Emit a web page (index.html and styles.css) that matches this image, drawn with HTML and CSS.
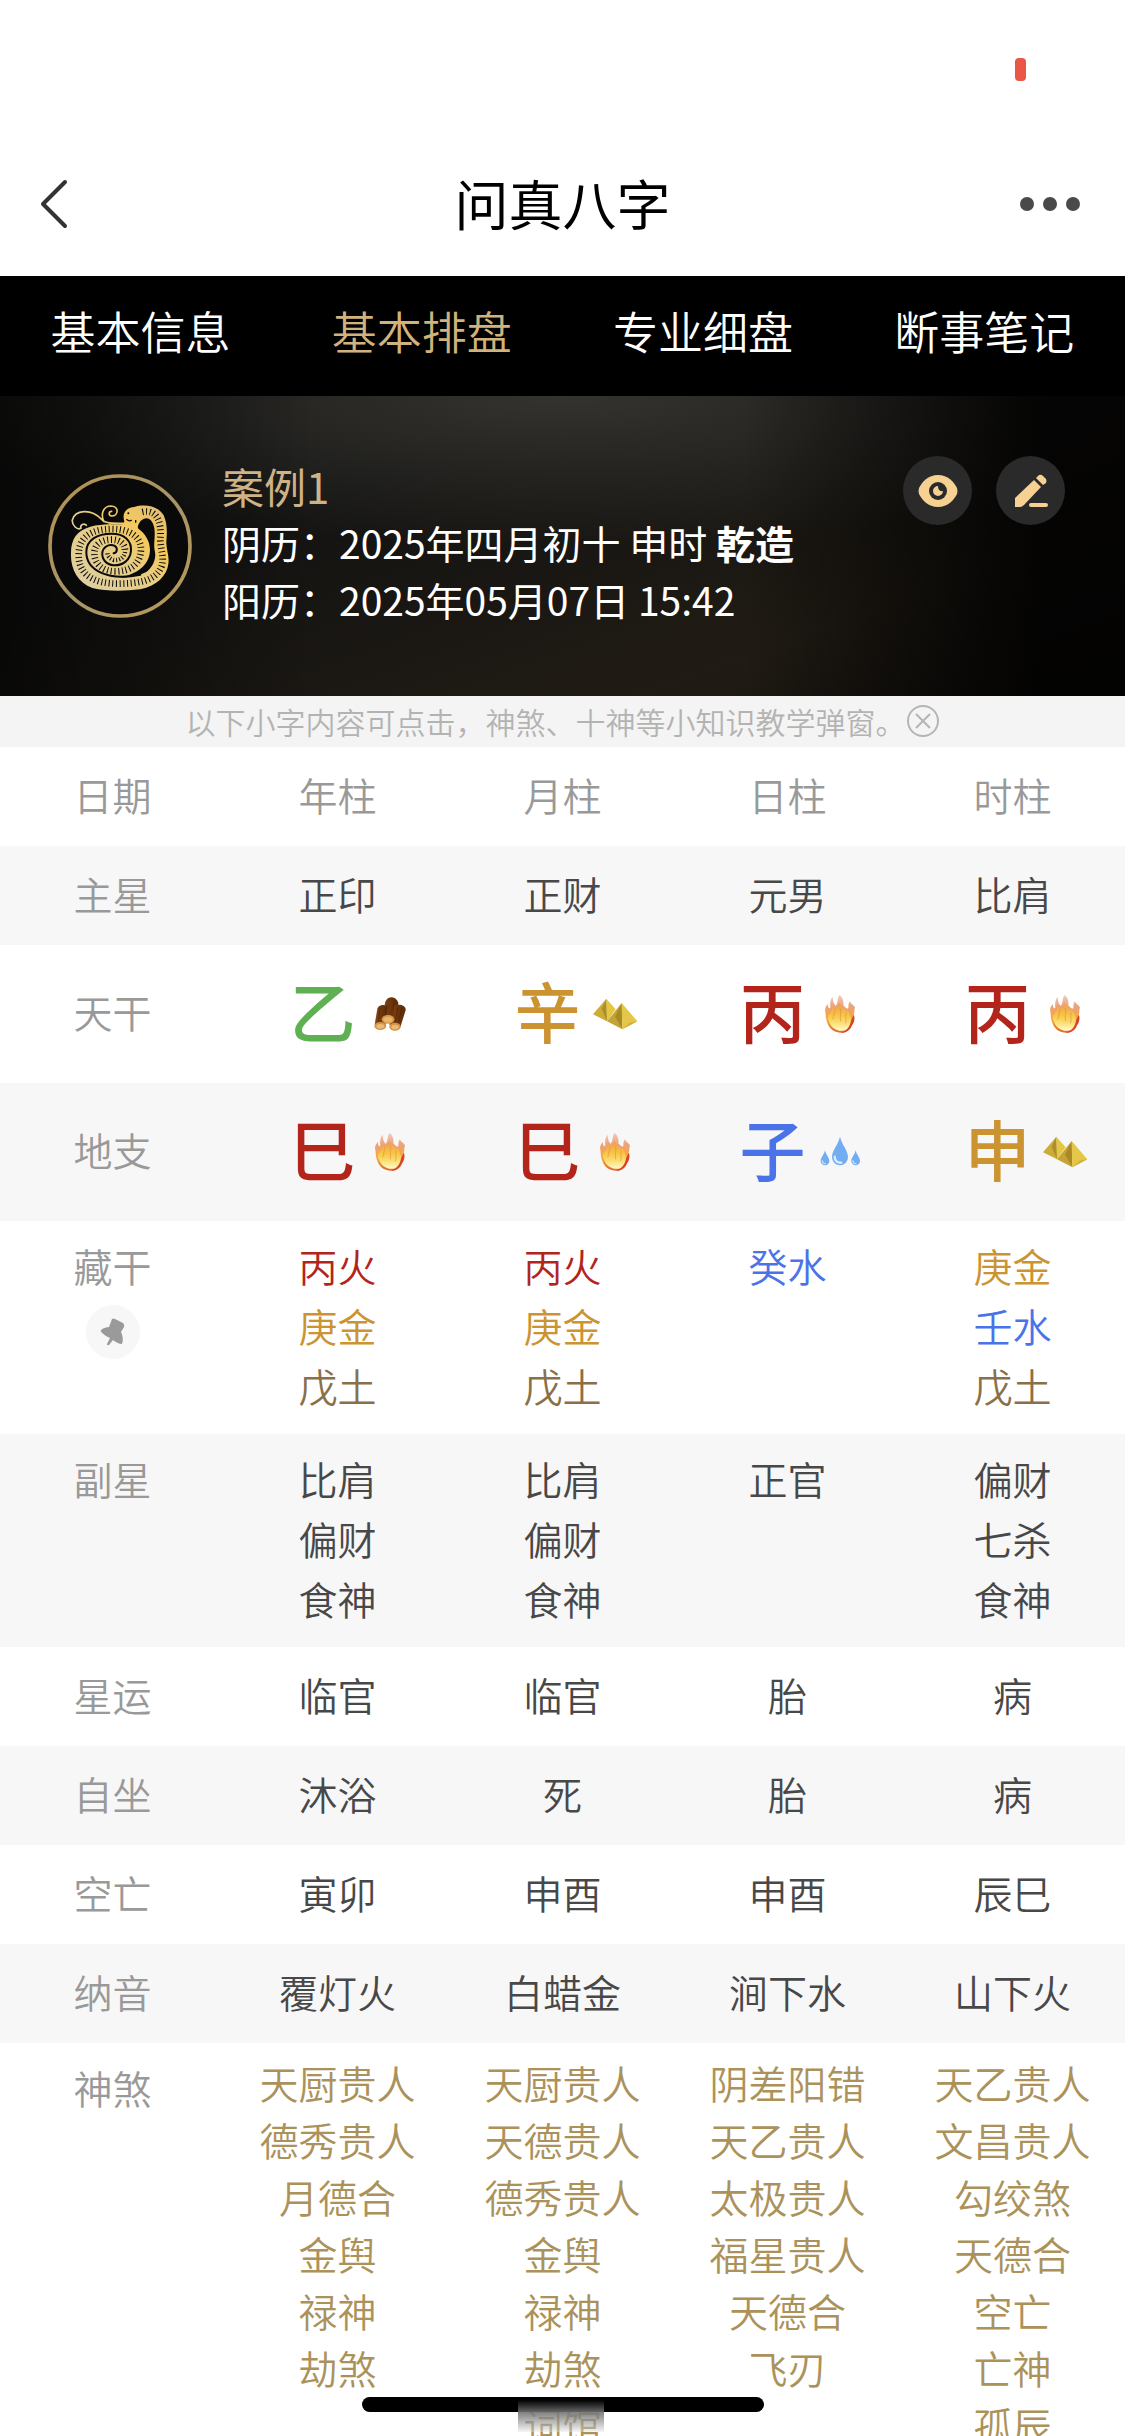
FILE: index.html
```html
<!DOCTYPE html>
<html lang="zh-CN">
<head>
<meta charset="utf-8">
<meta name="viewport" content="width=device-width, initial-scale=1">
<title>问真八字</title>
<link rel="stylesheet" href="styles.css">
</head>
<body>
<svg class="defs" aria-hidden="true">
  <defs>
    <linearGradient id="gold" x1="0" y1="1" x2="1" y2="0">
      <stop offset="0" stop-color="#ddd0a8"/><stop offset=".45" stop-color="#e6cc86"/><stop offset=".7" stop-color="#f5c95c"/><stop offset="1" stop-color="#dcbc7c"/>
    </linearGradient>
    <linearGradient id="ring" x1="0" y1="0" x2="1" y2="1">
      <stop offset="0" stop-color="#b3924e"/><stop offset=".5" stop-color="#a69468"/><stop offset="1" stop-color="#b89a58"/>
    </linearGradient>
    <linearGradient id="flame" x1="0" y1="0" x2="0" y2="1">
      <stop offset="0" stop-color="#f3cbbf"/><stop offset=".3" stop-color="#ecA27a"/><stop offset=".65" stop-color="#f6a83c"/><stop offset="1" stop-color="#e2682a"/>
    </linearGradient>
    <linearGradient id="flame-core" x1="0" y1="0" x2="0" y2="1">
      <stop offset="0" stop-color="#ec9a50"/><stop offset=".45" stop-color="#f9c544"/><stop offset=".75" stop-color="#fbe27a"/><stop offset="1" stop-color="#fffbd0"/>
    </linearGradient>
    <linearGradient id="bark" x1="0" y1="0" x2="1" y2="0">
      <stop offset="0" stop-color="#8b4a14"/><stop offset=".5" stop-color="#6e360c"/><stop offset="1" stop-color="#5a2c0a"/>
    </linearGradient>
  </defs>
  <symbol id="fire" viewBox="0 0 144 144">
    <path fill="url(#flame)" d="M34 98C28 84 30 74 28 66C25 54 32 46 36 42C35 50 38 56 43 54C42 42 42 28 50 20C50 32 54 44 60 47C66 38 64 24 70 15C80 20 84 36 82 46C88 54 94 58 97 54C98 46 96 40 102 34C105 44 116 46 117 54C113 60 117 68 113 74C115 84 114 92 110 98C106 116 94 126 78 128C58 129 40 118 34 98Z"/>
    <path fill="#d9432a" d="M113 74C118 82 115 98 108 106C102 122 88 130 76 128C92 120 100 108 103 96Z"/>
    <path fill="url(#flame-core)" d="M35 84C36 72 42 74 46 62C52 56 52 48 57 50C62 56 66 48 71 38C76 50 84 56 88 62C94 60 100 66 101 76C110 88 102 112 88 121C66 127 42 116 35 84Z"/>
    <path fill="none" stroke="#e08a4a" stroke-opacity=".6" stroke-width="3" d="M58 56C52 68 56 76 50 88M72 54C78 68 70 80 74 94M91 68C86 82 94 88 88 100"/>
  </symbol>
  <symbol id="wood" viewBox="0 0 144 144">
    <path fill="url(#bark)" d="M56 48C56 16 88 14 97 38L92 96H48Z"/>
    <path fill="url(#bark)" d="M34 56C38 44 54 42 64 50L58 106L26 104Z"/>
    <path fill="url(#bark)" d="M84 48C98 40 120 46 119 60L103 112L70 104Z"/>
    <path fill="none" stroke="#3a1a04" stroke-opacity=".45" stroke-width="3" d="M64 44L58 80M84 32L80 80M96 50L88 98M42 54L36 96M108 52L97 98"/>
    <ellipse cx="66" cy="88" rx="19" ry="13" fill="#d99a4c"/><ellipse cx="66" cy="89" rx="13" ry="8" fill="#e8b56c"/>
    <ellipse cx="43" cy="108" rx="18" ry="12" fill="#d39248"/><ellipse cx="43" cy="109" rx="12" ry="7" fill="#e9bb78"/>
    <ellipse cx="87" cy="110" rx="17" ry="12" fill="#d39248"/><ellipse cx="87" cy="111" rx="11" ry="7" fill="#e9bb78"/>
  </symbol>
  <symbol id="metal" viewBox="0 0 144 144">
    <path fill="#cbac38" d="M6 73L46 26L48 94Z"/>
    <path fill="#ad8f2a" d="M32 56L46 26L48 94Z"/>
    <path fill="#e3c745" d="M46 26L74 58L48 94Z"/>
    <path fill="#c3a434" d="M48 94L92 39L94 118Z"/>
    <path fill="#a98a26" d="M72 80L92 39L94 118Z"/>
    <path fill="#e4c748" d="M92 39L139 94L94 118Z"/>
    <path fill="#cfb03a" d="M94 118L139 94L116 98Z"/>
  </symbol>
  <symbol id="water" viewBox="0 0 144 144">
    <path fill="#72adf2" d="M72 26C78 52 96 66 96 88A24 24 0 0 1 48 88C48 66 66 52 72 26Z"/>
    <path fill="#72adf2" d="M27 67C30 82 40 88 40 99A13 13 0 0 1 14 99C14 88 24 82 27 67Z"/>
    <path fill="#72adf2" d="M119 67C122 82 132 88 132 99A13 13 0 0 1 106 99C106 88 116 82 119 67Z"/>
    <path fill="none" stroke="#d8ecff" stroke-width="7" stroke-linecap="round" d="M56 86C56 100 66 105 76 104"/>
    <path fill="none" stroke="#c0dcfb" stroke-width="4" stroke-linecap="round" d="M19 98C19 104 24 107 28 107M111 98C111 104 116 107 120 107"/>
  </symbol>
</svg>

<div class="app">
  <div class="status"><span class="rec"></span></div>
  <header class="bar">
    <button class="icon-btn" aria-label="返回">
      <svg width="30" height="50" viewBox="0 0 30 50"><path d="M26 3L4 25L26 47" fill="none" stroke="#333" stroke-width="4" stroke-linecap="round" stroke-linejoin="round"/></svg>
    </button>
    <h1>问真八字</h1>
    <button class="icon-btn end" aria-label="更多">
      <svg width="62" height="16" viewBox="0 0 62 16" fill="#4a4a4a"><circle cx="8" cy="8" r="7"/><circle cx="31" cy="8" r="7"/><circle cx="54" cy="8" r="7"/></svg>
    </button>
  </header>

  <nav class="tabs">
    <a href="#info">基本信息</a>
    <a href="#chart" class="on" aria-current="page">基本排盘</a>
    <a href="#detail">专业细盘</a>
    <a href="#notes">断事笔记</a>
  </nav>

  <section class="hero">
    <svg class="zodiac" viewBox="23 42 432 432" role="img" aria-label="蛇">
      <circle cx="239" cy="258" r="210" fill="#090909" stroke="url(#ring)" stroke-width="11"/>
      <path fill="url(#gold)" d="M252 184C244 160 258 142 282 141C312 132 352 136 370 166C382 192 380 222 378 246C377 266 388 288 384 312C380 346 350 378 300 388C250 394 196 394 156 384C112 368 90 326 92 280C92 236 110 212 150 200C190 190 226 194 250 192Z"/>
      <path fill="#0a0a0a" d="M300 184C318 166 336 174 342 204C346 236 338 250 344 276C348 300 336 322 318 336C290 350 262 352 236 354C290 342 328 316 329 270C329 244 316 222 294 206C290 198 296 192 300 184Z"/>
      <path fill="none" stroke="#0a0a0a" stroke-width="6" stroke-linecap="round" d="M300 344C200 364 138 330 138 276C138 240 170 221 214 221C252 221 274 242 272 272C270 300 248 317 220 316C198 314 184 298 186 278C188 262 204 252 218 256C234 260 232 278 220 280"/>
      <path fill="none" stroke="#0a0a0a" stroke-width="20" stroke-dasharray="3 8" d="M306 156C352 146 364 190 360 236C360 266 372 292 364 318C346 366 290 370 235 371C160 371 115 345 115 285C115 230 155 207 215 207C275 207 302 236 302 268C300 312 272 334 224 334C188 334 162 312 162 280C162 252 186 239 214 239C240 239 254 252 254 272"/>
      <path fill="none" stroke="#0a0a0a" stroke-width="13" stroke-dasharray="3 6" d="M254 276C252 292 238 302 220 300C208 296 200 288 202 276"/>
      <path fill="none" stroke="url(#gold)" stroke-width="5" stroke-linecap="round" d="M138 196C132 188 118 194 122 204C112 212 94 196 96 180C104 150 150 144 184 178C192 190 214 190 250 190M190 184C180 160 190 138 212 138C238 140 234 168 214 168C204 166 204 154 214 154"/>
      <circle cx="264" cy="160" r="3" fill="#0a0a0a"/><path d="M258 178Q268 186 274 180M286 180V188" stroke="#0a0a0a" stroke-width="4" fill="none"/>
    </svg>
    <div class="person">
      <p class="name">案例1</p>
      <p>阴历：2025年四月初十 申时 <strong>乾造</strong></p>
      <p>阳历：2025年05月07日 15:42</p>
    </div>
    <div class="actions">
      <button class="round" aria-label="查看">
        <svg width="40" height="32" viewBox="0 0 40 32"><path fill="#f6d192" d="M20 0C30 0 36 7 39 13Q40 16 39 19C36 25 30 32 20 32S4 25 1 19Q0 16 1 13C4 7 10 0 20 0Z"/><circle cx="20" cy="16" r="9" fill="#2a2a2a"/><path fill="#f6d192" d="M20 11A5 5 0 1 0 25 16Q20 17 20 11Z"/></svg>
      </button>
      <button class="round" aria-label="编辑">
        <svg width="34" height="34" viewBox="0 0 34 34" fill="#f6d192"><path d="M1 33V24L20 6L27 13L10 31Q8 33 6 33Z"/><path d="M22 4L25 1Q27 0 29 2L32 5Q33 7 32 9L29 11Z"/><rect x="15" y="29" width="19" height="4" rx="2"/></svg>
      </button>
    </div>
  </section>

  <p class="hint">以下小字内容可点击，神煞、十神等小知识教学弹窗。<button aria-label="关闭"><svg width="34" height="34" viewBox="0 0 34 34" fill="none" stroke="#b5b5b5" stroke-width="2"><circle cx="17" cy="17" r="15"/><path d="M10 10L24 24M24 10L10 24"/></svg></button></p>

  <table class="chart">
    <thead>
      <tr><th scope="row">日期</th><th scope="col">年柱</th><th scope="col">月柱</th><th scope="col">日柱</th><th scope="col">时柱</th></tr>
    </thead>
    <tbody>
      <tr><th scope="row">主星</th><td>正印</td><td>正财</td><td>元男</td><td>比肩</td></tr>
      <tr class="big"><th scope="row">天干</th>
        <td><div class="sign green">乙<svg><use href="#wood"/></svg></div></td>
        <td><div class="sign gold">辛<svg><use href="#metal"/></svg></div></td>
        <td><div class="sign red">丙<svg><use href="#fire"/></svg></div></td>
        <td><div class="sign red">丙<svg><use href="#fire"/></svg></div></td></tr>
      <tr class="big"><th scope="row">地支</th>
        <td><div class="sign red">巳<svg><use href="#fire"/></svg></div></td>
        <td><div class="sign red">巳<svg><use href="#fire"/></svg></div></td>
        <td><div class="sign blue">子<svg><use href="#water"/></svg></div></td>
        <td><div class="sign gold">申<svg><use href="#metal"/></svg></div></td></tr>
      <tr class="list"><th scope="row">藏干
          <button class="pin" aria-label="固定"><svg width="26" height="28" viewBox="0 0 26 28"><path fill="#9a9a9a" d="M12 1Q13 0 15 1L23 5Q25 7 24 9L21 14Q24 20 22 26Q18 26 13 22L9 27Q7 28 7 26L10 20Q5 18 1 14Q0 13 2 11Q6 9 9 9Z"/></svg></button></th>
        <td><p class="red">丙火</p><p class="gold">庚金</p><p class="earth">戊土</p></td>
        <td><p class="red">丙火</p><p class="gold">庚金</p><p class="earth">戊土</p></td>
        <td><p class="blue">癸水</p></td>
        <td><p class="gold">庚金</p><p class="blue">壬水</p><p class="earth">戊土</p></td></tr>
      <tr class="list"><th scope="row">副星</th>
        <td><p>比肩</p><p>偏财</p><p>食神</p></td>
        <td><p>比肩</p><p>偏财</p><p>食神</p></td>
        <td><p>正官</p></td>
        <td><p>偏财</p><p>七杀</p><p>食神</p></td></tr>
      <tr><th scope="row">星运</th><td>临官</td><td>临官</td><td>胎</td><td>病</td></tr>
      <tr><th scope="row">自坐</th><td>沐浴</td><td>死</td><td>胎</td><td>病</td></tr>
      <tr><th scope="row">空亡</th><td>寅卯</td><td>申酉</td><td>申酉</td><td>辰巳</td></tr>
      <tr><th scope="row">纳音</th><td>覆灯火</td><td>白蜡金</td><td>涧下水</td><td>山下火</td></tr>
      <tr class="list stars"><th scope="row">神煞</th>
        <td><p>天厨贵人</p><p>德秀贵人</p><p>月德合</p><p>金舆</p><p>禄神</p><p>劫煞</p></td>
        <td><p>天厨贵人</p><p>天德贵人</p><p>德秀贵人</p><p>金舆</p><p>禄神</p><p>劫煞</p><p>词馆</p></td>
        <td><p>阴差阳错</p><p>天乙贵人</p><p>太极贵人</p><p>福星贵人</p><p>天德合</p><p>飞刃</p></td>
        <td><p>天乙贵人</p><p>文昌贵人</p><p>勾绞煞</p><p>天德合</p><p>空亡</p><p>亡神</p><p>孤辰</p></td></tr>
    </tbody>
  </table>
  <div class="home"></div>
</div>
</body>
</html>
```
FILE: styles.css
```css
* { box-sizing: border-box; }

body {
  margin: 0;
  background: #fff;
  color: #484848;
  font-family: "Noto Sans CJK SC", sans-serif;
  font-size: 39px;
  font-weight: 350;
  line-height: 60px;
}

h1, p { margin: 0; font-weight: inherit; }

button {
  display: inline-flex;
  align-items: center;
  justify-content: center;
  padding: 0;
  border: 0;
  background: none;
}

.defs { position: absolute; width: 0; height: 0; }

/* The app fills the window; what is longer is cut at its lower edge */
.app {
  position: relative;
  height: 100vh;
  overflow: hidden;
}

.status {
  display: flex;
  justify-content: flex-end;
  height: 132px;
  padding: 58px 99px 0 0;
}
.rec { width: 11px; height: 23px; border-radius: 4px; background: #ea5647; }

.bar {
  display: grid;
  grid-template-columns: 1fr auto 1fr;
  align-items: center;
  height: 144px;
  padding: 0 39px;
}
.bar h1 { padding-bottom: 2px; font-size: 54px; font-weight: 400; color: #000; }
.icon-btn { justify-self: start; }
.icon-btn.end { justify-self: end; margin-right: 5px; }

.tabs {
  display: grid;
  grid-template-columns: repeat(4, 1fr);
  height: 120px;
  padding-bottom: 10px;
  align-items: center;
  background: #000;
  text-align: center;
  font-size: 45px;
}
.tabs a { color: #fff; text-decoration: none; }
.tabs .on { color: #d2b27c; }

.hero {
  display: flex;
  align-items: center;
  gap: 30px;
  min-height: 300px;
  padding: 60px 60px 60px 48px;
  color: #fff;
  font-weight: 400;
  line-height: 57px;
  background:
    linear-gradient(90deg, rgba(0, 0, 0, .6), transparent 28%, transparent 66%, rgba(0, 0, 0, .85) 92%),
    radial-gradient(60% 50% at 50% 0, #34332f, transparent),
    linear-gradient(160deg, #131312 30%, #201b14 75%, #15120e);
}
.zodiac { width: 144px; height: 144px; flex: none; }
.person { flex: 1; padding-bottom: 8px; }
.person .name { color: #cfb285; font-size: 42px; }
.person strong { font-weight: 700; }
.actions { display: flex; gap: 24px; align-self: flex-start; }
.round { width: 69px; height: 69px; border-radius: 50%; background: #2a2a2a; }

.hint {
  display: flex;
  align-items: center;
  justify-content: center;
  height: 51px;
  padding-bottom: 2px;
  background: #f4f4f4;
  color: #b3b3b3;
  font-size: 30px;
}

.chart {
  width: 100%;
  table-layout: fixed;
  border-collapse: collapse;
  text-align: center;
}
.chart tr { height: 99px; }
.chart tbody tr:nth-child(odd) { background: #f7f7f7; }
.chart th, .chart td { padding: 0 0 6px; font-weight: inherit; }
.chart th { color: #999; }

.chart .big { height: 138px; }
.chart .big td { padding: 0 0 10px 28px; }
.sign {
  display: flex;
  align-items: center;
  justify-content: center;
  gap: 10px;
  font-size: 66px;
  font-weight: 500;
}
.sign svg { width: 48px; height: 48px; margin-top: 10px; }

.chart .list { height: auto; }
.chart .list th, .chart .list td { padding: 14px 0 19px; vertical-align: top; }
.pin {
  display: flex;
  width: 54px;
  height: 54px;
  margin: 10px auto 0;
  border-radius: 50%;
  background: #f7f7f7;
}
.chart .stars td { padding-top: 11px; color: #ab925b; line-height: 57px; }

.red { color: #b3241a; }
.gold { color: #cb9431; }
.green { color: #5fb052; }
.blue { color: #4a73ea; }
.earth { color: #8a6f48; }

/* Home indicator, lying over the table */
.home {
  position: absolute;
  left: 50%;
  bottom: 24px;
  width: 402px;
  height: 15px;
  margin-left: -201px;
  border-radius: 8px;
  background: #000;
}
.home::after {
  content: "";
  position: absolute;
  left: 156px;
  top: 3px;
  width: 86px;
  height: 32px;
  background: linear-gradient(#000, rgba(120, 120, 120, .9) 40%, rgba(230, 230, 230, .4));
}
```
